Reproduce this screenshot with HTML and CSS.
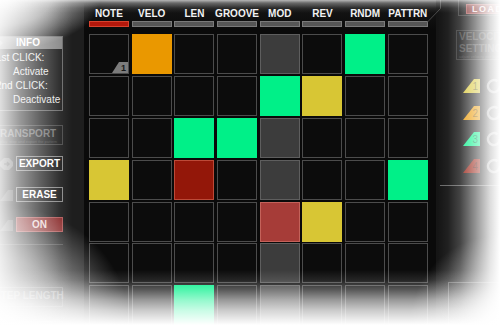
FILE: index.html
```html
<!DOCTYPE html>
<html>
<head>
<meta charset="utf-8">
<title>Sequencer</title>
<link rel="stylesheet" href="styles.css">
</head>
<body>
<div class="app">
  <aside class="left">
    <section class="info">
      <div class="info-head">
        <svg class="info-ico" viewBox="0 0 8 8" width="8" height="8"><path d="M1 4 L4 1 L7 4 L4 7 Z" fill="#a8a8a8"/></svg>
        <span>INFO</span>
      </div>
      <div class="info-body">
        <p class="step">1st CLICK:</p>
        <p class="act">Activate</p>
        <p class="step">2nd CLICK:</p>
        <p class="act">Deactivate</p>
      </div>
    </section>
    <section class="box transport">
      <span class="box-title">TRANSPORT</span>
      <span class="box-sub">play, stop and export the pattern</span>
    </section>
    <div class="btn-row first">
      <svg class="side-ico" viewBox="0 0 13 12" width="13" height="12"><path d="M4 0 H9 L13 4 V8 L9 12 H4 L0 8 V4 Z" fill="#5a5a5a"/><path d="M4 6 H9 M7 4 L9 6 L7 8" stroke="#1e1e1e" stroke-width="1.4" fill="none"/></svg>
      <div class="btn">EXPORT</div>
    </div>
    <div class="btn-row">
      <svg class="side-ico" viewBox="0 0 13 12" width="13" height="12"><path d="M0 12 L8 1 H13 V12 Z" fill="#4a4a4a"/></svg>
      <div class="btn">ERASE</div>
    </div>
    <div class="btn-row">
      <svg class="side-ico" viewBox="0 0 13 12" width="13" height="12"><path d="M0 12 L8 1 H13 V12 Z" fill="#4a4a4a"/></svg>
      <div class="btn btn-on">ON</div>
    </div>
    <div class="divider"></div>
    <section class="box steplen">
      <span class="box-title">STEP LENGTH</span>
      <span class="box-sub">length of each step</span>
    </section>
    <div class="box lower"></div>
  </aside>

  <main class="seq">
    <div class="heads">
      <div class="head"><span class="lbl">NOTE</span><i class="bar bar-on"></i></div>
      <div class="head"><span class="lbl">VELO</span><i class="bar"></i></div>
      <div class="head"><span class="lbl">LEN</span><i class="bar"></i></div>
      <div class="head"><span class="lbl">GROOVE</span><i class="bar"></i></div>
      <div class="head"><span class="lbl">MOD</span><i class="bar"></i></div>
      <div class="head"><span class="lbl">REV</span><i class="bar"></i></div>
      <div class="head"><span class="lbl">RNDM</span><i class="bar"></i></div>
      <div class="head"><span class="lbl">PATTRN</span><i class="bar"></i></div>
    </div>
    <div class="grid">
      <div class="c badge-cell"><span class="badge"><svg viewBox="0 0 16 11" width="16" height="11"><path d="M0 11 L7 0 H16 V11 Z" fill="#7c7c7c"/></svg><b>1</b></span></div>
      <div class="c o"></div><div class="c"></div><div class="c"></div><div class="c m"></div><div class="c"></div><div class="c g"></div><div class="c"></div>

      <div class="c"></div><div class="c"></div><div class="c"></div><div class="c"></div><div class="c g"></div><div class="c y"></div><div class="c"></div><div class="c"></div>

      <div class="c"></div><div class="c"></div><div class="c g"></div><div class="c g"></div><div class="c m"></div><div class="c"></div><div class="c"></div><div class="c"></div>

      <div class="c y"></div><div class="c"></div><div class="c r"></div><div class="c"></div><div class="c m"></div><div class="c"></div><div class="c"></div><div class="c g"></div>

      <div class="c"></div><div class="c"></div><div class="c"></div><div class="c"></div><div class="c lr"></div><div class="c y"></div><div class="c"></div><div class="c"></div>

      <div class="c"></div><div class="c"></div><div class="c"></div><div class="c"></div><div class="c m"></div><div class="c"></div><div class="c"></div><div class="c"></div>

      <div class="c"></div><div class="c"></div><div class="c g"></div><div class="c"></div><div class="c m"></div><div class="c"></div><div class="c"></div><div class="c"></div>
    </div>
  </main>

  <aside class="right">
    <svg class="frame-line" viewBox="0 0 16 24" width="16" height="24"><path d="M0 22.5 L13.5 8.5 V0" stroke="#4a4a4a" stroke-width="1" fill="none"/></svg>
    <div class="load-wrap"><div class="load-btn">LOAD</div></div>
    <div class="vel">
      <span class="vel-title">VELOCITY</span>
      <span class="vel-title">SETTINGS</span>
      <span class="vel-sub">adjust velocity per layer</span>
    </div>
    <div class="slots">
      <div class="slot"><span class="tag t1"><svg viewBox="0 0 17 14" width="17" height="14"><path d="M0 14 L11 0 H17 V14 Z"/></svg><b>1</b></span><svg class="knob" viewBox="0 0 16 16" width="16" height="16"><path d="M11.5 3.2 A6 6 0 1 0 14 8" stroke="#8a8a8a" stroke-width="2.4" fill="none"/></svg></div>
      <div class="slot"><span class="tag t2"><svg viewBox="0 0 17 14" width="17" height="14"><path d="M0 14 L11 0 H17 V14 Z"/></svg><b>2</b></span><svg class="knob" viewBox="0 0 16 16" width="16" height="16"><path d="M11.5 3.2 A6 6 0 1 0 14 8" stroke="#8a8a8a" stroke-width="2.4" fill="none"/></svg></div>
      <div class="slot"><span class="tag t3"><svg viewBox="0 0 17 14" width="17" height="14"><path d="M0 14 L11 0 H17 V14 Z"/></svg><b>3</b></span><svg class="knob" viewBox="0 0 16 16" width="16" height="16"><path d="M11.5 3.2 A6 6 0 1 0 14 8" stroke="#8a8a8a" stroke-width="2.4" fill="none"/></svg></div>
      <div class="slot"><span class="tag t4"><svg viewBox="0 0 17 14" width="17" height="14"><path d="M0 14 L11 0 H17 V14 Z"/></svg><b>4</b></span><svg class="knob" viewBox="0 0 16 16" width="16" height="16"><path d="M11.5 3.2 A6 6 0 1 0 14 8" stroke="#8a8a8a" stroke-width="2.4" fill="none"/></svg></div>
    </div>
    <div class="rule"></div>
    <div class="corner-box"></div>
  </aside>
</div>
<div class="vignette"></div>
</body>
</html>
```

FILE: styles.css
```css
* { box-sizing: border-box; }

html, body {
  margin: 0;
  padding: 0;
}

body {
  width: 500px;
  height: 325px;
  overflow: hidden;
  position: relative;
  background: #0a0a0a;
  font-family: "Liberation Sans", Arial, sans-serif;
}

.app {
  display: flex;
  height: 325px;
}

/* ---------- left panel ---------- */
.left {
  flex: none;
  width: 94px;
  margin-left: -10px;
  padding: 36px 0 0 3px;
  background: linear-gradient(#2a2a2a 0, #1e1e1e 30px);
  display: flex;
  flex-direction: column;
}

.info {
  width: 70px;
  border: 1px solid #6a6a6a;
  background: #1e1e1e;
}

.info-head {
  height: 12px;
  background: #868686;
  display: grid;
  grid-template-columns: 1fr auto 1fr;
  align-items: center;
  color: #fff;
  font-weight: bold;
  font-size: 10px;
  line-height: 12px;
}

.info-ico { margin-left: 2px; }

.info-body {
  padding: 2px 0 3px 2px;
  font-size: 10px;
  line-height: 14px;
  color: #e8e8e8;
}

.info-body p { margin: 0; white-space: nowrap; }
.info-body .act { padding-left: 17px; }

.box {
  width: 70px;
  border: 1px solid #4a4a4a;
  display: flex;
  flex-direction: column;
}

.box-title {
  font-weight: bold;
  font-size: 10px;
  line-height: 10px;
  color: #707070;
  white-space: nowrap;
  padding: 3px 0 0 0;
}

.box-sub {
  font-size: 4px;
  line-height: 5px;
  color: #4a4a4a;
  white-space: nowrap;
  padding-left: 6px;
}

.transport {
  margin-top: 14px;
  height: 20px;
}

.btn-row {
  display: flex;
  align-items: center;
  height: 15px;
  margin-top: 16px;
}

.btn-row.first { margin-top: 11px; }
.btn-row + .btn-row + .btn-row { margin-top: 15px; }

.side-ico {
  margin-left: 7px;
  margin-right: 3px;
  flex: none;
}

.btn {
  width: 47px;
  height: 15px;
  border: 1px solid #8a8a8a;
  background: #1c1c1c;
  color: #fff;
  font-weight: bold;
  font-size: 10px;
  line-height: 13px;
  text-align: center;
}

.btn-on {
  background: #8a2c2c;
  border-color: #b05858;
  color: #ead6d6;
}

.divider {
  margin-top: 12px;
  width: 70px;
  height: 1px;
  background: #444;
}

.steplen {
  margin-top: 43px;
  height: 20px;
}

.lower {
  margin-top: 14px;
  margin-left: 26px;
  width: 44px;
  height: 14px;
}

/* ---------- sequencer ---------- */
.seq {
  flex: none;
  width: 352px;
  padding-left: 5px;
  background: linear-gradient(#303030 0, #141414 10px, #0a0a0a 30px);
}

.heads,
.grid {
  display: grid;
  grid-template-columns: repeat(8, 40px);
  column-gap: 2.7px;
}

.heads { padding-top: 8px; }

.head {
  display: flex;
  flex-direction: column;
  align-items: center;
}

.lbl {
  font-weight: bold;
  font-size: 10px;
  line-height: 12px;
  color: #f2f2f2;
  white-space: nowrap;
}

.bar {
  display: block;
  width: 40px;
  height: 6px;
  margin-top: 1px;
  background: #565656;
  border: 1px solid #7a7a7a;
}

.bar-on {
  background: #b4180c;
  border-color: #d8422e;
}

.grid {
  margin-top: 7px;
  grid-auto-rows: 40px;
  row-gap: 1.9px;
}

.c {
  background: #0c0c0c;
  border: 1px solid #4c4c4c;
}

.c.o { background: #ea9800; border-color: #ea9800; }
.c.g { background: #00f088; border-color: #00f088; }
.c.y { background: #d8c634; border-color: #d8c634; }
.c.r { background: #931709; border-color: #bd4a38; }
.c.m { background: #3c3c3c; border-color: #5e5e5e; }
.c.lr { background: #a63c38; border-color: #c4625a; }

.badge-cell { position: relative; }

.badge {
  position: absolute;
  right: 0;
  bottom: 0;
  width: 16px;
  height: 11px;
}

.badge svg { display: block; }

.badge b {
  position: absolute;
  right: 2px;
  bottom: 0;
  font-size: 9px;
  line-height: 10px;
  color: #1a1a1a;
}

/* ---------- right panel ---------- */
.right {
  flex: 1;
  position: relative;
  background: #151515;
  display: flex;
  flex-direction: column;
}

.frame-line {
  position: absolute;
  left: -9px;
  top: 0;
}

.load-wrap {
  margin-left: 22px;
  height: 18px;
  border-left: 1px solid #3e3e3e;
  border-bottom: 1px solid #3e3e3e;
  padding: 4px 0 0 7px;
}

.load-btn {
  width: 42px;
  height: 10px;
  background: #7c2a2a;
  border: 1px solid #a65050;
  color: #f0dede;
  font-weight: bold;
  font-size: 9px;
  line-height: 8px;
  letter-spacing: 1.5px;
  padding-left: 5px;
}

.vel {
  margin: 14px 0 0 20px;
  border: 1px solid #383838;
  padding: 0 2px;
  display: flex;
  flex-direction: column;
  white-space: nowrap;
}

.vel-title {
  font-weight: bold;
  font-size: 10px;
  line-height: 11.5px;
  color: #474747;
}

.vel-sub {
  font-size: 4px;
  line-height: 5px;
  color: #3a3a3a;
}

.slots {
  margin-top: 19px;
  padding-left: 27px;
  display: flex;
  flex-direction: column;
  gap: 12.5px;
}

.slot {
  height: 14px;
  display: flex;
  align-items: center;
  gap: 6px;
}

.tag {
  position: relative;
  width: 17px;
  height: 14px;
  flex: none;
}

.tag svg { display: block; }

.tag b {
  position: absolute;
  right: 2px;
  bottom: 1px;
  font-weight: normal;
  font-size: 10px;
  line-height: 11px;
  color: rgba(0, 0, 0, 0.45);
}

.t1 svg { fill: #d8c634; }
.t2 svg { fill: #ea9800; }
.t3 svg { fill: #00f088; }
.t4 svg { fill: #931709; }

.knob { flex: none; }

.rule {
  margin: 12px 0 0 4px;
  height: 1px;
  background: #6a6a6a;
}

.corner-box {
  margin: 97px 0 0 12px;
  height: 50px;
  border: 1px solid #555;
}

/* ---------- edge fade of the picture ---------- */
.vignette {
  position: absolute;
  inset: 0;
  pointer-events: none;
  background:
    linear-gradient(to bottom, rgba(255,255,255,.65) 0, rgba(255,255,255,.3) 3px, rgba(255,255,255,.08) 8px, rgba(255,255,255,0) 13px),
    linear-gradient(to right, rgba(255,255,255,.86) 0, rgba(255,255,255,.55) 20px, rgba(255,255,255,.3) 40px, rgba(255,255,255,.08) 60px, rgba(255,255,255,0) 72px),
    linear-gradient(to left, #fff 0, rgba(255,255,255,.85) 10px, rgba(255,255,255,.64) 20px, rgba(255,255,255,.42) 30px, rgba(255,255,255,.2) 40px, rgba(255,255,255,.05) 52px, rgba(255,255,255,0) 62px),
    linear-gradient(to top, #fff 0, rgba(255,255,255,.93) 5px, rgba(255,255,255,.78) 15px, rgba(255,255,255,.58) 25px, rgba(255,255,255,.32) 35px, rgba(255,255,255,.1) 45px, rgba(255,255,255,0) 55px),
    radial-gradient(ellipse 100px 50px at 0 0, rgba(255,255,255,.95) 0, rgba(255,255,255,.6) 50%, rgba(255,255,255,0) 100%),
    radial-gradient(ellipse 130px 120px at 0 100%, rgba(255,255,255,.9) 0, rgba(255,255,255,.5) 55%, rgba(255,255,255,0) 100%),
    radial-gradient(ellipse 90px 90px at 100% 100%, rgba(255,255,255,.8) 0, rgba(255,255,255,0) 100%);
}
```
